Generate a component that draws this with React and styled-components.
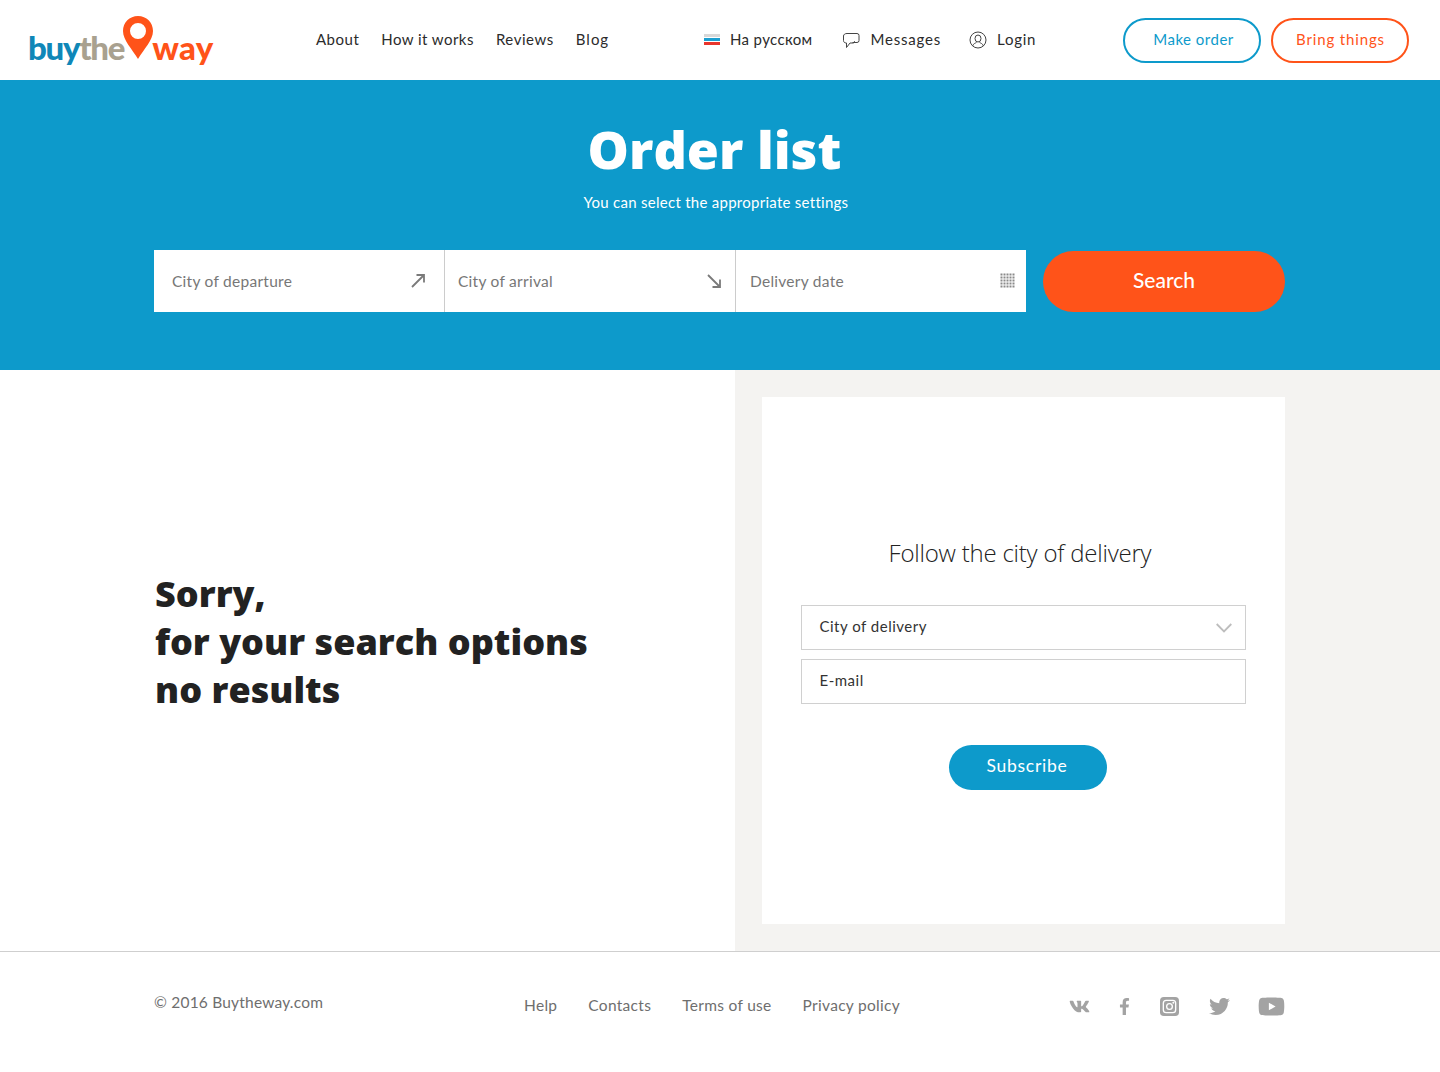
import React from 'react';
import styled, { createGlobalStyle } from 'styled-components';
import { FaVk, FaFacebookF, FaTwitter, FaYoutube } from 'react-icons/fa';

const Global = createGlobalStyle`
  html, body { margin: 0; padding: 0; background: #fff; }
  body { font-family: "Lato", "Noto Sans", sans-serif; color: #222; }
  * { box-sizing: border-box; }
`;
const Page = styled.div`width: 1440px; height: 1072px; overflow: hidden; display: flex; flex-direction: column;`;
const Header = styled.header`height: 80px; display: flex; align-items: center; padding-left: 29px; flex: none;`;
const Logo = styled.div`width: 287px; flex: none; display: flex; align-items: flex-end; height: 50px; position: relative; font-family: "Lato", sans-serif; font-weight: 900; font-size: 33px; line-height: 30px; padding-bottom: 3px;`;
const LogoPart = styled.span`color: ${p => p.$c}; margin: 0 ${p => p.$mr || 0}px 0 ${p => p.$ml || 0}px; letter-spacing: ${p => p.$ls}px;`;
const Pin = styled.svg`position: absolute; left: 94px; top: 1px;`;
const MainNav = styled.nav`display: flex; gap: 22px; width: 388px; flex: none; margin-bottom: 2px;`;
const NavLink = styled.a`font-size: 15px; letter-spacing: ${p => p.$ls ?? 0.5}px; color: #2b2b2b; white-space: nowrap; display: flex; align-items: center; gap: ${p => p.$gap || 0}px; margin-right: ${p => p.$mr || 0}px; svg { margin-top: 2px; }`;
const Utility = styled.div`display: flex; align-items: center; gap: 28px; width: 419px; flex: none; margin-bottom: 2px;`;
const Pill = styled.a`width: 138px; height: 45px; border-radius: 23px; border: 2px solid ${p => p.$c}; color: ${p => p.$c}; font-size: 15px; letter-spacing: ${p => p.$ls}px; display: flex; align-items: center; justify-content: center; margin-right: 10px; padding: 0 0 2px ${p => p.$pl}px;`;
const Hero = styled.section`height: 290px; background: #0d9acb; flex: none; display: flex; flex-direction: column; align-items: center; padding-top: 37px; color: #fff;`;
const Title = styled.h1`margin: 0 11px 0 0; font: 800 52px/64px "Open Sans", sans-serif; height: 64px;`;
const Sub = styled.p`margin: 11px 8px 0 0; font-size: 15px; line-height: 20px; letter-spacing: .27px;`;
const SearchRow = styled.div`margin: 38px 1px 0 0; width: 1131px; display: flex; align-items: flex-end; justify-content: space-between;`;
const Fields = styled.div`width: 872px; height: 62px; background: #fff; display: grid; grid-template-columns: 291px 291px 290px;`;
const Field = styled.div`display: flex; align-items: center; justify-content: space-between; padding: 0 ${p => p.$pr}px 0 ${p => p.$pl}px; color: #777; font-size: 15.5px; letter-spacing: .27px; border-right: ${p => p.$last ? 'none' : '1px solid #ccc'};`;
const SearchBtn = styled.button`width: 242px; height: 61px; border: 0; border-radius: 31px; background: #ff5319; color: #fff; font: 500 21px "Lato", sans-serif; padding-bottom: 6px;`;
const Main = styled.main`height: 582px; display: grid; grid-template-columns: 735px 705px; border-bottom: 1px solid #cfcfcf; flex: none;`;
const Left = styled.div`display: flex; align-items: center; padding: 0 0 0 155px;`;
const Sorry = styled.h2`margin: 0 0 38px; font: 800 36px/48px "Open Sans", sans-serif; color: #222; letter-spacing: .02px;`;
const Right = styled.div`background: #f4f3f1; padding: 27px 0 0 27px;`;
const Card = styled.div`width: 523px; height: 527px; background: #fff; padding: 139px 39px 0; display: flex; flex-direction: column;`;
const CardTitle = styled.h3`margin: 0 0 36px -1px; text-align: center; font: 300 24px/33px "Open Sans", sans-serif; color: #222; letter-spacing: -.22px; padding-right: 6px;`;
const Input = styled.div`height: 45px; border: 1px solid #d0d0d0; margin-bottom: 9px; display: flex; align-items: center; justify-content: space-between; padding: 0 13px 4px 17.5px; font-size: 15px; letter-spacing: .5px; color: #333;`;
const Chevron = styled.svg`margin-top: 5px;`;
const Subscribe = styled.button`align-self: center; margin: 32px 0 0 9px; width: 158px; height: 45px; border: 0; border-radius: 23px; background: #0d9acb; color: #fff; font: 400 17.5px "Lato", sans-serif; letter-spacing: .75px; padding: 0 2px 4px 0;`;
const Footer = styled.footer`flex: 1; display: flex; align-items: flex-start; padding: 40px 0 0 154px; color: #6e6e6e; font-size: 15.5px;`;
const Copy = styled.div`width: 370px; letter-spacing: .2px; line-height: 20px;`;
const FootNav = styled.nav`display: flex; gap: 31px; width: 545px; margin-top: 3px; line-height: 20px; letter-spacing: .3px;`;
const Social = styled.div`display: flex; align-items: center; height: 26px; color: #a3a3a3; margin-top: 1px;`;
const SocialItem = styled.a`display: flex; margin-left: ${p => p.$ml || 0}px;`;

const Pinmark = () => (
  <Pin width="30" height="43" viewBox="0 0 30 43" aria-hidden="true">
    <path fillRule="evenodd" fill="#ff5319" d="M15 0C6.500 0 0 6.500 0 15c0 9 9 18 15 28 6-10 15-19 15-28C30 6.500 23.500 0 15 0Zm0 7a8 8 0 1 1 0 16 8 8 0 0 1 0-16Z" />
  </Pin>
);
const Flag = () => (
  <svg width="16" height="12" viewBox="0 0 16 12" aria-hidden="true">
    <rect width="16" height="3" fill="#d8d8d8" /><rect y="4" width="16" height="3" fill="#1c9fd0" /><rect y="8" width="16" height="3" fill="#e8362d" />
  </svg>
);
const Chat = () => (
  <svg width="18" height="18" viewBox="0 0 18 18" fill="none" stroke="#444" strokeWidth="1" aria-hidden="true">
    <path d="M5 2.500h10a2 2 0 0 1 2 2v5a2 2 0 0 1-2 2h-4.500" />
    <path d="M5 2.500C3 2.500 1.500 3.500 1.500 5v4.500c0 1.500 1 2.500 3 2.500v4.500l3.500-4.500h3c1 0 1.500-1 1.500-2" />
  </svg>
);
const User = () => (
  <svg width="18" height="18" viewBox="0 0 18 18" fill="none" stroke="#444" strokeWidth="1" aria-hidden="true">
    <circle cx="9" cy="9" r="8" /><ellipse cx="9" cy="7.500" rx="3" ry="3.500" /><path d="M3.500 15c1-2.500 3-3 4-3.500M14.500 15c-1-2.500-3-3-4-3.500" />
  </svg>
);
const Arrow = ({ down }) => (
  <svg width="14" height="14" viewBox="0 0 14 14" fill="none" stroke="#7a7a7a" strokeWidth="1.800" aria-hidden="true">
    {down ? <path d="M1 1l11.500 11.500M13 5.500V13H5.500" /> : <path d="M1 13L12.500 1.500M5.500 1H13v7.500" />}
  </svg>
);
const DateGrid = () => (
  <svg width="16" height="16" viewBox="0 0 16 16" aria-hidden="true">
    {[0, 3, 6, 9, 12].flatMap(x => [0, 3, 6, 9, 12].map(y => <rect key={`${x}-${y}`} x={x + .5} y={y + .5} width="2" height="2" fill="#8a8a8a" />))}
  </svg>
);
const ChevronIcon = () => (
  <Chevron width="16" height="10" viewBox="0 0 16 10" fill="none" stroke="#bdbdbd" strokeWidth="1.800" aria-hidden="true">
    <path d="M.7 1L8 8.500 15.300 1" />
  </Chevron>
);
const Insta = () => (
  <svg width="19" height="19" viewBox="0 0 20 20" aria-hidden="true">
    <rect width="20" height="20" rx="4" fill="#a3a3a3" />
    <rect x="3.500" y="3.500" width="13" height="13" rx="3" fill="none" stroke="#fff" strokeWidth="1.400" />
    <circle cx="10" cy="10" r="3" fill="none" stroke="#fff" strokeWidth="1.400" />
    <circle cx="14" cy="6" r="1" fill="#fff" />
  </svg>
);

export default function App() {
  return (
    <Page>
      <Global />
      <Header>
        <Logo>
          <LogoPart $c="#0f87b8" $ls={-1.3} $ml={-1}>buy</LogoPart><LogoPart $c="#a9a18f" $ls={-1.3} $mr={28}>the</LogoPart><LogoPart $c="#ff5319" $ls={0.3}>way</LogoPart>
          <Pinmark />
        </Logo>
        <MainNav>
          <NavLink>About</NavLink><NavLink $ls={0.45}>How it works</NavLink><NavLink $ls={0.55}>Reviews</NavLink><NavLink $ls={1}>Blog</NavLink>
        </MainNav>
        <Utility>
          <NavLink $gap={10} $ls={0.35} $mr={1}><Flag />На русском</NavLink>
          <NavLink $gap={11} $ls={0.8}><Chat />Messages</NavLink>
          <NavLink $gap={10} $ls={0.75}><User />Login</NavLink>
        </Utility>
        <Pill $c="#0d9acb" $ls={0.5} $pl={3}>Make order</Pill>
        <Pill $c="#ff5319" $ls={0.85} $pl={1}>Bring things</Pill>
      </Header>
      <Hero>
        <Title>Order list</Title>
        <Sub>You can select the appropriate settings</Sub>
        <SearchRow>
          <Fields>
            <Field $pl={18} $pr={19}>City of departure<Arrow /></Field>
            <Field $pl={13} $pr={14}>City of arrival<Arrow down /></Field>
            <Field $pl={14} $pr={10} $last>Delivery date<DateGrid /></Field>
          </Fields>
          <SearchBtn>Search</SearchBtn>
        </SearchRow>
      </Hero>
      <Main>
        <Left><Sorry>Sorry,<br />for your search options<br />no results</Sorry></Left>
        <Right>
          <Card>
            <CardTitle>Follow the city of delivery</CardTitle>
            <Input>City of delivery<ChevronIcon /></Input>
            <Input>E-mail</Input>
            <Subscribe>Subscribe</Subscribe>
          </Card>
        </Right>
      </Main>
      <Footer>
        <Copy>© 2016 Buytheway.com</Copy>
        <FootNav><span>Help</span><span>Contacts</span><span>Terms of use</span><span>Privacy policy</span></FootNav>
        <Social>
          <SocialItem><FaVk size={21} /></SocialItem>
          <SocialItem $ml={26}><FaFacebookF size={17} /></SocialItem>
          <SocialItem $ml={27}><Insta /></SocialItem>
          <SocialItem $ml={30}><FaTwitter size={21} /></SocialItem>
          <SocialItem $ml={28}><FaYoutube size={27} /></SocialItem>
        </Social>
      </Footer>
    </Page>
  );
}
